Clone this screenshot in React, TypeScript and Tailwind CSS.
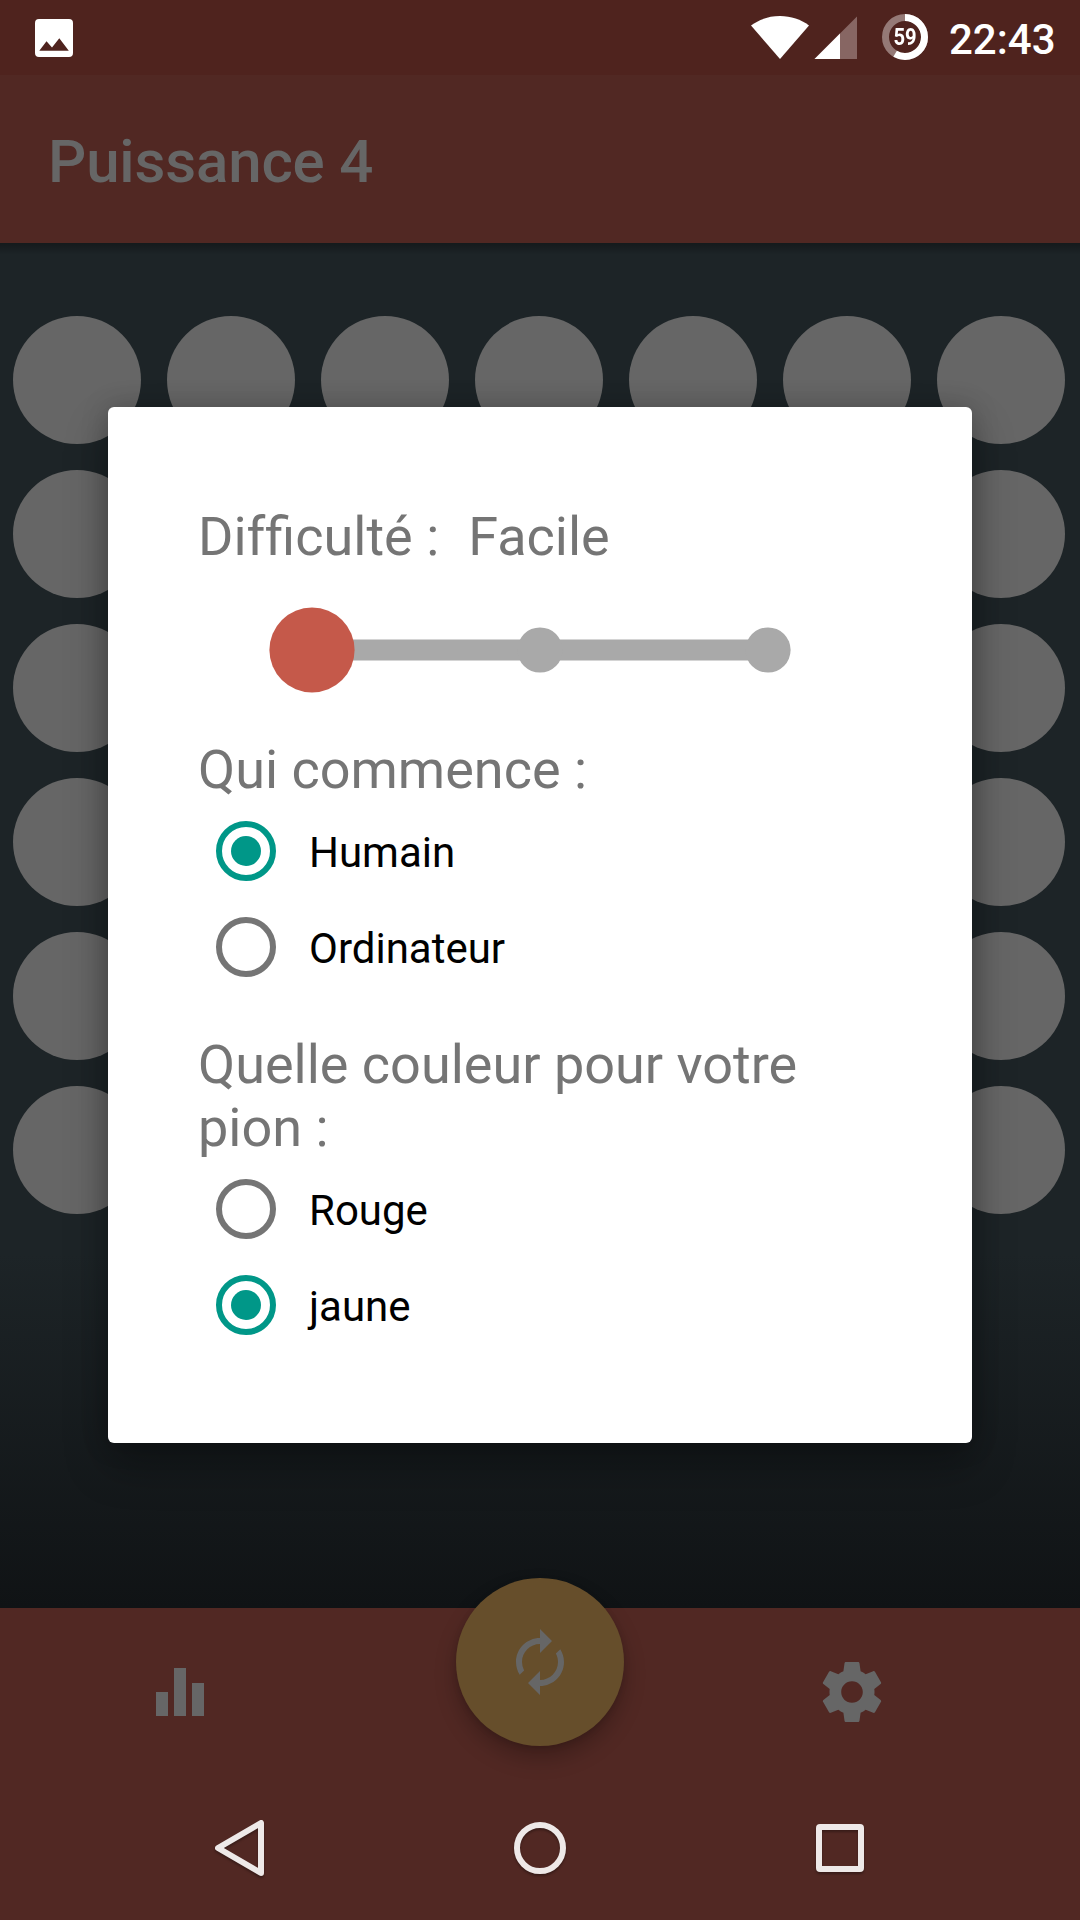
import React from "react";
import { MdAutorenew } from "react-icons/md";

const ROWS = 6;
const COLS = 7;

function StatusBar() {
  return (
    <header className="flex h-[75px] shrink-0 items-start bg-[#4f231e] pl-[35px] text-white">
      <svg className="mt-[19px] h-[38px] w-[38px]" viewBox="0 0 38 38">
        <path
          fill="currentColor"
          fillRule="evenodd"
          d="M4 0h30a4 4 0 0 1 4 4v30a4 4 0 0 1-4 4H4a4 4 0 0 1-4-4V4a4 4 0 0 1 4-4zM4.3 31.7h29.5L24.3 19.2 17 28.5l-5.500-6.200z"
        />
      </svg>
      <svg className="mt-4 ml-[678px] h-[43px] w-[58px]" viewBox="0 0 58 43">
        <path fill="currentColor" d="M0 9.5C8 3.5 18 0 29 0s21 3.500 29 9.500L29 43z" />
      </svg>
      <svg className="mt-4 ml-[5px] h-[43px] w-[43px]" viewBox="0 0 43 43">
        <path fill="#876663" d="M43 0.500V43H0.500z" />
        <path fill="currentColor" d="M26 17.500V43H0.500z" />
      </svg>
      <div className="relative mt-[14px] ml-[25px] h-[46px] w-[46px]">
        <svg className="h-full w-full -rotate-90" viewBox="0 0 46 46">
          <circle cx="23" cy="23" r="19.500" fill="none" stroke="#957976" strokeWidth="7" />
          <circle cx="23" cy="23" r="19.500" fill="none" stroke="currentColor" strokeWidth="7" pathLength="100" strokeDasharray="58.500 100" />
        </svg>
        <span className="absolute inset-0 flex scale-x-[0.84] items-center justify-center text-[24px] leading-none font-bold">59</span>
      </div>
      <span className="mt-[15px] ml-[21px] text-[42px] leading-[49px] font-medium">22:43</span>
    </header>
  );
}

function Board() {
  return (
    <main className="h-[1365px] shrink-0 bg-[linear-gradient(to_bottom,#1d2427_0px,#1d2427_1010px,#101315_1365px)]">
      <div className="h-[12px] bg-linear-to-b from-black/30 to-transparent" />
      <div className="mt-[61px] ml-[13px] grid w-max grid-cols-[repeat(7,128px)] gap-[26px]">
        {Array.from({ length: ROWS * COLS }, (_, i) => (
          <div key={i} className="h-32 w-32 rounded-full bg-[#666666]" />
        ))}
      </div>
    </main>
  );
}

function BottomBar() {
  return (
    <footer className="relative h-[168px] shrink-0 bg-[#512823] text-[#666666]">
      <div className="flex h-full items-center justify-between pr-[192px] pl-[156px]">
        <div className="flex h-12 w-12 items-end gap-[6px]">
          <div className="h-6 w-3 bg-[#666666]" />
          <div className="h-12 w-3 bg-[#666666]" />
          <div className="h-[33px] w-3 bg-[#666666]" />
        </div>
        <svg className="h-[72px] w-[72px]" viewBox="0 0 24 24" fill="currentColor">
          <path d="M19.43 12.98c.04-.32.07-.64.07-.98s-.03-.66-.07-.98l2.11-1.65c.19-.15.24-.42.12-.64l-2-3.46c-.12-.22-.39-.3-.61-.22l-2.490 1c-.52-.4-1.080-.73-1.690-.98l-.38-2.650C14.460 2.180 14.250 2 14 2h-4c-.25 0-.46.18-.49.42l-.38 2.650c-.61.25-1.170.59-1.690.98l-2.490-1c-.23-.09-.49 0-.61.22l-2 3.460c-.13.22-.07.49.12.64l2.110 1.650c-.04.32-.07.65-.07.98s.03.66.07.98l-2.110 1.650c-.19.15-.24.42-.12.64l2 3.460c.12.22.39.3.61.22l2.490-1c.52.4 1.080.73 1.690.98l.38 2.650c.03.24.24.42.49.42h4c.25 0 .46-.18.49-.42l.38-2.650c.61-.25 1.170-.59 1.690-.98l2.490 1c.23.09.49 0 .61-.22l2-3.460c.12-.22.07-.49-.12-.64l-2.110-1.650zM12 15.600c-1.990 0-3.600-1.610-3.600-3.600s1.610-3.600 3.600-3.600 3.600 1.610 3.600 3.600-1.610 3.600-3.600 3.600z" />
        </svg>
      </div>
      <button className="absolute -top-[30px] left-[456px] flex h-[168px] w-[168px] items-center justify-center rounded-full bg-[#664e2b] shadow-[0_12px_22px_rgba(0,0,0,0.24),0_2px_6px_rgba(0,0,0,0.12)]">
        <MdAutorenew className="h-[72px] w-[72px]" />
      </button>
    </footer>
  );
}

function NavBar() {
  return (
    <nav className="flex h-36 shrink-0 items-center justify-between bg-[#512823] pr-[216px] pl-[215px] text-[#eee9e8]">
      <svg className="h-14 w-[49px] drop-shadow-[0_2px_1px_rgba(0,0,0,0.3)]" viewBox="0 0 49 56">
        <path d="M46 3v50L3 28z" fill="none" stroke="currentColor" strokeWidth="6" strokeLinejoin="round" />
      </svg>
      <div className="h-[52px] w-[52px] rounded-full border-6 border-current drop-shadow-[0_2px_1px_rgba(0,0,0,0.3)]" />
      <svg className="h-12 w-12 drop-shadow-[0_2px_1px_rgba(0,0,0,0.3)]" viewBox="0 0 48 48">
        <path fill="currentColor" fillRule="evenodd" d="M4 0h40a4 4 0 0 1 4 4v40a4 4 0 0 1-4 4H4a4 4 0 0 1-4-4V4a4 4 0 0 1 4-4zM6 6v36h36V6z" />
      </svg>
    </nav>
  );
}

function Radio({ label, checked = false }: { label: string; checked?: boolean }) {
  return (
    <label className="flex h-24 items-center pl-[18px]">
      <span
        className={
          checked
            ? "flex h-[60px] w-[60px] items-center justify-center rounded-full border-6 border-[#009788]"
            : "h-[60px] w-[60px] rounded-full border-6 border-[#757575]"
        }
      >
        {checked && <span className="h-[30px] w-[30px] rounded-full bg-[#009788]" />}
      </span>
      <span className="ml-[33px] pt-[3px] text-[42px] leading-[49px] text-black">{label}</span>
    </label>
  );
}

function Slider() {
  return (
    <svg className="ml-[71px] h-[86px] w-[522px]" viewBox="0 0 522 86">
      <rect x="43" y="32.500" width="456" height="21" fill="#a9a9a9" />
      <circle cx="271" cy="43" r="22.600" fill="#a9a9a9" />
      <circle cx="499" cy="43" r="22.600" fill="#a9a9a9" />
      <circle cx="43" cy="43" r="42.600" fill="#c5594a" />
    </svg>
  );
}

function SettingsDialog() {
  return (
    <div className="absolute inset-0 flex items-start justify-center pt-[407px]">
      <section className="h-[1036px] w-[864px] rounded-[6px] bg-white px-[90px] pt-[98px] text-[54px] leading-[63px] text-[#757575] shadow-[0_22px_44px_rgba(0,0,0,0.3),0_0_28px_rgba(0,0,0,0.2)]">
        <div className="flex">
          <span>Dif&zwnj;ficulté :</span>
          <span className="ml-[29px]">Facile</span>
        </div>
        <div className="mt-[39px]">
          <Slider />
        </div>
        <h2 className="mt-[45px]">Qui commence :</h2>
        <div className="mt-[2px]">
          <Radio label="Humain" checked />
          <Radio label="Ordinateur" />
        </div>
        <h2 className="mt-[38px]">Quelle couleur pour votre pion :</h2>
        <div className="mt-[2px]">
          <Radio label="Rouge" />
          <Radio label="jaune" checked />
        </div>
      </section>
    </div>
  );
}

export default function App() {
  return (
    <div className="relative flex h-[1920px] w-[1080px] flex-col overflow-hidden bg-[#512823] font-[Roboto,sans-serif]">
      <StatusBar />
      <div className="flex h-[168px] shrink-0 items-center bg-[#512823] pl-12">
        <h1 className="pt-[5px] text-[60px] leading-[70px] font-medium tracking-[-0.15px] text-[#666666]">Puissance 4</h1>
      </div>
      <Board />
      <BottomBar />
      <NavBar />
      <SettingsDialog />
    </div>
  );
}
